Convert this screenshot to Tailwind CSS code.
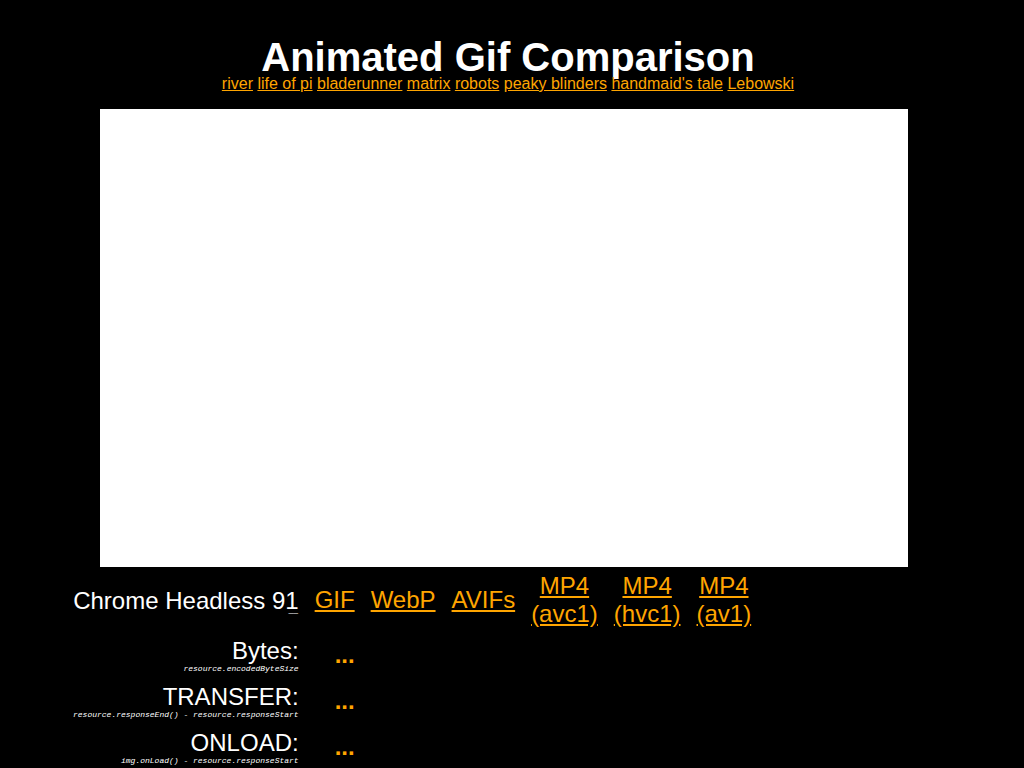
<!DOCTYPE html>
<html lang="en">
<head>
<meta charset="utf-8">
<title>Animated Gif Comparison</title>
<script src="https://cdn.jsdelivr.net/npm/@tailwindcss/browser@4"></script>
</head>
<body class="bg-black text-white font-['Liberation_Sans',Arial,sans-serif] text-base h-screen overflow-hidden">
<main>
<header class="pt-8 pr-2 text-center">
<h1 class="text-[40px] leading-[50px] font-bold">Animated Gif Comparison</h1>
<nav class="-mt-2 pt-px leading-[18px] text-[#ffa500]">
<a class="underline" href="#river">river</a>
<a class="underline" href="#pi">life of pi</a>
<a class="underline" href="#bladerunner">bladerunner</a>
<a class="underline" href="#matrix">matrix</a>
<a class="underline" href="#robots">robots</a>
<a class="underline" href="#peaky">peaky blinders</a>
<a class="underline" href="#handmaid">handmaid's tale</a>
<a class="underline" href="#lebowski">Lebowski</a>
</nav>
</header>
<div class="mt-4 pr-4"><div class="mx-auto w-full max-w-[808px] h-[458px] bg-white"></div></div>
<table class="ml-[73px] mt-[5px] text-2xl leading-7 text-center">
<thead>
<tr class="h-14 text-[#ffa500]">
<th scope="col" class="pr-2 pb-0.5 font-normal text-right text-white">Chrome Headless 91<code class="block -mt-1 text-[8px] leading-0 italic font-['Liberation_Mono',monospace]">__</code></th>
<th scope="col" class="px-2 font-normal"><a class="underline" href="#gif">GIF</a></th>
<th scope="col" class="px-2 font-normal"><a class="underline" href="#webp">WebP</a></th>
<th scope="col" class="px-2 font-normal"><a class="underline" href="#avif">AVIFs</a></th>
<th scope="col" class="px-2 font-normal"><a class="underline" href="#avc1">MP4<br>(avc1)</a></th>
<th scope="col" class="px-2 font-normal"><a class="underline" href="#hvc1">MP4<br>(hvc1)</a></th>
<th scope="col" class="px-2 font-normal"><a class="underline" href="#av1">MP4<br>(av1)</a></th>
</tr>
</thead>
<tbody>
<tr class="h-[46px]"><th scope="row" class="pt-2 pr-2 font-normal text-right">Bytes:<code class="block text-[8px] leading-2 italic font-['Liberation_Mono',monospace]">resource.encodedByteSize</code></th><td class="pt-2 pr-2 text-right font-bold text-[#ffa500]">...</td></tr>
<tr class="h-[46px]"><th scope="row" class="pt-2 pr-2 font-normal text-right">TRANSFER:<code class="block text-[8px] leading-2 italic font-['Liberation_Mono',monospace]">resource.responseEnd() - resource.responseStart</code></th><td class="pt-2 pr-2 text-right font-bold text-[#ffa500]">...</td></tr>
<tr class="h-[46px]"><th scope="row" class="pt-2 pr-2 font-normal text-right">ONLOAD:<code class="block text-[8px] leading-2 italic font-['Liberation_Mono',monospace]">img.onLoad() - resource.responseStart</code></th><td class="pt-2 pr-2 text-right font-bold text-[#ffa500]">...</td></tr>
</tbody>
</table>
</main>
</body>
</html>
